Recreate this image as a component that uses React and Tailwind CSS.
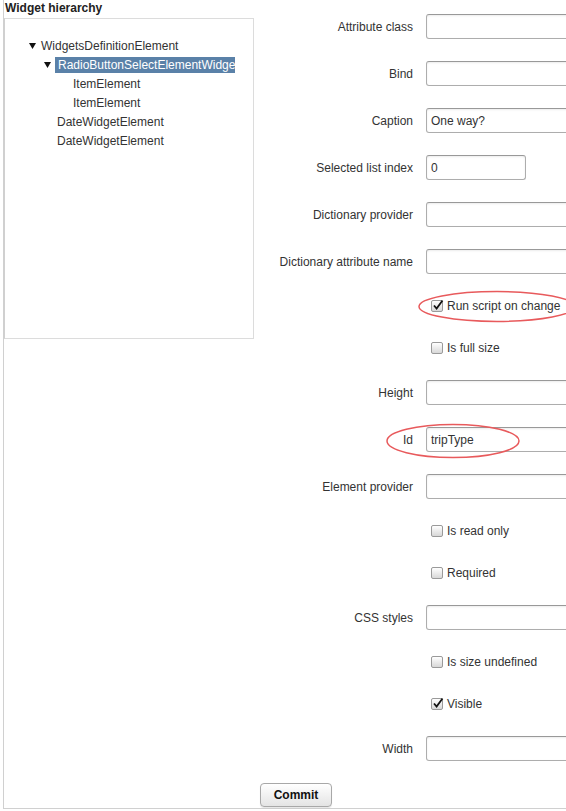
import React from 'react';

const fields = [
  { type: 'input', label: 'Attribute class' },
  { type: 'input', label: 'Bind' },
  { type: 'input', label: 'Caption', value: 'One way?' },
  { type: 'input', label: 'Selected list index', value: '0', short: true },
  { type: 'input', label: 'Dictionary provider' },
  { type: 'input', label: 'Dictionary attribute name' },
  { type: 'check', label: 'Run script on change', checked: true },
  { type: 'check', label: 'Is full size' },
  { type: 'input', label: 'Height' },
  { type: 'input', label: 'Id', value: 'tripType' },
  { type: 'input', label: 'Element provider' },
  { type: 'check', label: 'Is read only' },
  { type: 'check', label: 'Required' },
  { type: 'input', label: 'CSS styles' },
  { type: 'check', label: 'Is size undefined' },
  { type: 'check', label: 'Visible', checked: true },
  { type: 'input', label: 'Width' },
];

const Arrow = () => (
  <svg width="7" height="6" viewBox="0 0 7 6" className="shrink-0">
    <polygon points="0,0 7,0 3.5,6" fill="#111" />
  </svg>
);

const CheckBox = ({ checked }) => (
  <span className="relative inline-block w-[12px] h-[12px] rounded-[2px] border border-[#9a9a9a] bg-gradient-to-b from-[#ffffff] to-[#d8d8d8] shrink-0">
    {checked && (
      <svg width="12" height="12" viewBox="0 0 12 12" className="absolute left-[0px] top-[-2px]">
        <path d="M2 6.5 L4.6 9.5 L10.5 1.5" stroke="#111" strokeWidth="1.8" fill="none" />
      </svg>
    )}
  </span>
);

const FieldRow = ({ field }) => {
  if (field.type === 'check') {
    return (
      <div className="h-[42px] flex items-center">
        <div className="w-[159px] shrink-0" />
        <div className="ml-[18px] flex items-center gap-[4px]">
          <CheckBox checked={field.checked} />
          <span className="whitespace-nowrap">{field.label}</span>
        </div>
      </div>
    );
  }
  return (
    <div className="h-[47px] flex items-center">
      <div className="w-[159px] shrink-0 text-right whitespace-nowrap">{field.label}</div>
      <div
        className={`ml-[13px] h-[25px] ${field.short ? 'w-[100px]' : 'w-[180px]'} shrink-0 border border-[#adadad] border-t-[#999] rounded-[3px] bg-white shadow-[inset_0_1px_2px_rgba(0,0,0,0.08)] flex items-center px-[4px] whitespace-nowrap`}
      >
        {field.value}
      </div>
    </div>
  );
};

export default function App() {
  return (
    <div
      className="relative w-[566px] h-[811px] overflow-hidden bg-white text-[12px] text-[#333]"
      style={{ fontFamily: '"Liberation Sans", Arial, sans-serif' }}
    >
      <div className="ml-[3px] w-[620px] h-[809px] border-l border-b border-[#d0d0d0] flex">
        {/* left: widget hierarchy */}
        <div className="w-[250px] shrink-0">
          <div className="h-[18px] pl-[1px] font-bold text-[#222] leading-[16px]">Widget hierarchy</div>
          <div className="h-[321px] border border-[#dcdcdc] border-l-[#d0d0d0] bg-white pt-[17px] overflow-hidden">
            <div className="h-[19px] flex items-center pl-[24px]">
              <Arrow />
              <span className="ml-[5px] whitespace-nowrap">WidgetsDefinitionElement</span>
            </div>
            <div className="h-[19px] flex items-center pl-[39px]">
              <Arrow />
              <span className="ml-[4px] w-[180px] h-[16px] bg-[#5a81a8] text-white pl-[3px] leading-[16px] whitespace-nowrap overflow-hidden">
                RadioButtonSelectElementWidget
              </span>
            </div>
            <div className="h-[19px] flex items-center pl-[68px]">ItemElement</div>
            <div className="h-[19px] flex items-center pl-[68px]">ItemElement</div>
            <div className="h-[19px] flex items-center pl-[52px]">DateWidgetElement</div>
            <div className="h-[19px] flex items-center pl-[52px]">DateWidgetElement</div>
          </div>
        </div>

        {/* right: property form */}
        <div className="flex-1 pt-[3px] flex flex-col">
          {fields.map((f, i) => (
            <FieldRow key={i} field={f} />
          ))}
          <div className="pt-[11px] pl-[6px]">
            <button className="w-[72px] h-[24px] rounded-[4px] border border-[#a8a8a8] bg-gradient-to-b from-[#ffffff] to-[#e4e4e4] font-bold text-[#111] shadow-[0_1px_1px_rgba(0,0,0,0.1)]">
              Commit
            </button>
          </div>
        </div>
      </div>

      {/* red annotation ellipses */}
      <svg className="absolute left-[417px] top-[290px]" width="160" height="33" viewBox="0 0 160 33">
        <ellipse cx="80" cy="16.5" rx="78" ry="15" fill="none" stroke="#e85a5c" strokeWidth="1.5" />
      </svg>
      <svg className="absolute left-[386px] top-[423px]" width="135" height="36" viewBox="0 0 135 36">
        <ellipse cx="67" cy="18" rx="66" ry="16.5" fill="none" stroke="#e85a5c" strokeWidth="1.5" />
      </svg>
    </div>
  );
}
